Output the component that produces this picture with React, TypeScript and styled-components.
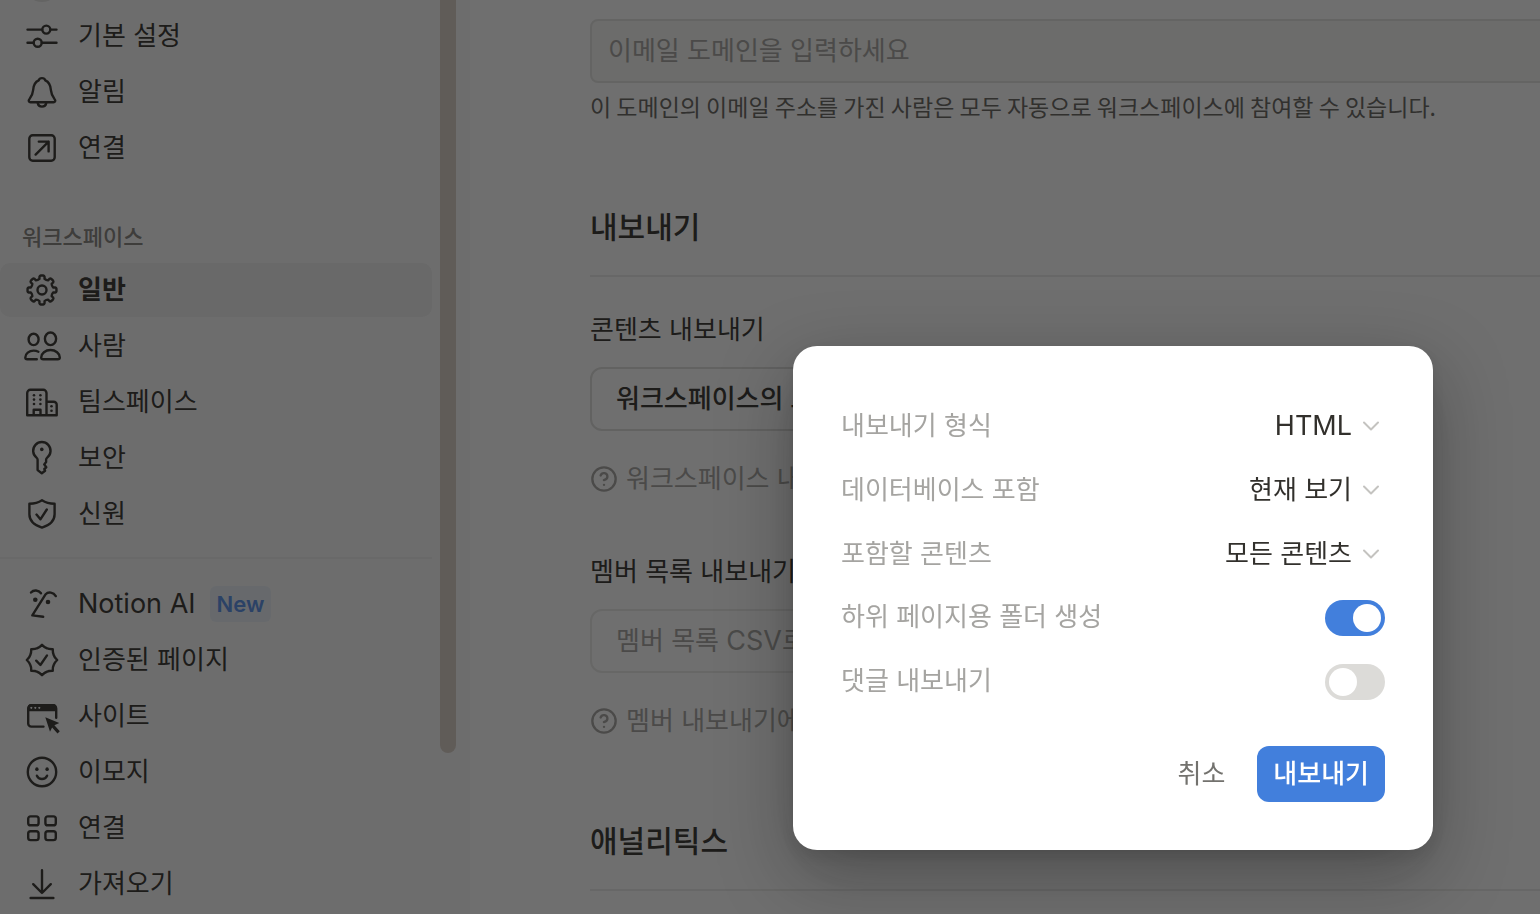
import React from "react";
import styled, { createGlobalStyle, css } from "styled-components";
import { CircleHelp } from "lucide-react";

const GlobalStyle = createGlobalStyle`
  *, *::before, *::after { box-sizing: border-box; }
  html, body { margin: 0; height: 100%; overflow: hidden; }
  #root { height: 100%; }
  body {
    background: #ffffff;
    color: #32302c;
    font-family: Inter, "Noto Sans CJK KR", sans-serif;
    font-size: 26px;
    line-height: 32px;
  }
  button, input, select { font: inherit; color: inherit; margin: 0; }
`;

const Page = styled.div`
  display: grid;
  grid-template-columns: 470px minmax(0, 1fr);
  height: 100vh;
  overflow: hidden;
`;

/* Latin words run one step larger than the Hangul beside them */
const Latin = styled.span`
  font-size: 27px;
`;

/* ---------- sidebar ---------- */

const Sidebar = styled.aside`
  display: flex;
  justify-content: space-between;
  padding-right: 14px;
  background: #fbfbfb;
  overflow: hidden;
`;

const Nav = styled.nav`
  flex: 1;
  margin-right: 8px;
`;

const ScrollThumb = styled.div`
  width: 16px;
  height: 753px;
  max-height: 83vh;
  border-radius: 0 0 8px 8px;
  background: #dacfc6;
`;

const AccountRow = styled.div`
  display: flex;
  align-items: flex-end;
  height: 9px;
  padding: 0 22px 7px;
  overflow: hidden;
`;

const Avatar = styled.span`
  flex: none;
  width: 36px;
  height: 36px;
  margin-left: 2px;
  border-radius: 50%;
  background: #e4e4e2;
`;

const NavList = styled.ul`
  display: flex;
  flex-direction: column;
  gap: 2px;
  margin: 0;
  padding: 0;
  list-style: none;
`;

const NavItem = styled.a<{ $active?: boolean }>`
  display: flex;
  align-items: center;
  gap: 16px;
  height: 54px;
  padding-left: 22px;
  border-radius: 10px;
  color: inherit;
  text-decoration: none;
  white-space: nowrap;
  ${(p) =>
    p.$active &&
    css`
      background: #efefef;
      font-weight: 600;
    `}
`;

const NavHeading = styled.h2`
  margin: 36px 0 0;
  padding-left: 22px;
  font-size: 22px;
  line-height: 52px;
  font-weight: 500;
  color: #84827e;
`;

const NavDivider = styled.hr`
  height: 2px;
  margin: 16px 0 18px;
  border: 0;
  background: #f0f0ef;
`;

const Badge = styled.span`
  padding: 0 7px;
  margin-left: -2px;
  border-radius: 6px;
  background: #ebf1f8;
  color: #568ee8;
  font-size: 22px;
  line-height: 36px;
  font-weight: 600;
`;

const Glyph = styled.svg`
  flex: none;
  width: 40px;
  height: 40px;
  fill: none;
  stroke: currentColor;
  stroke-width: 2.4;
  stroke-linecap: round;
  stroke-linejoin: round;

  .solid {
    fill: currentColor;
    stroke: none;
  }
`;

/* ---------- main column ---------- */

const Main = styled.main`
  padding: 19px 0 0 120px;
  overflow: hidden;
`;

const Column = styled.div`
  margin-right: -24px;
`;

const DomainInput = styled.input`
  display: block;
  width: 100%;
  height: 64px;
  padding: 0 16px 2px;
  border: 2px solid #e3e3e1;
  border-radius: 8px;
  background: #f7f7f4;
  outline: 0;

  &::placeholder {
    color: #a5a4a0;
    opacity: 1;
  }
`;

const Hint = styled.p`
  margin: 7px 0 0;
  font-family: "Noto Sans CJK KR", sans-serif;
  font-size: 23px;
  color: #65635d;
  white-space: nowrap;
`;

const SectionTitle = styled.h1`
  margin: 0;
  padding-bottom: 24px;
  border-bottom: 2px solid #ececeb;
  font-size: 30px;
  line-height: 48px;
  font-weight: 500;
`;

const Section = styled.section`
  margin-top: 81px;

  & + & {
    margin-top: 80px;
  }
`;

const Field = styled.div<{ $first?: boolean }>`
  display: flex;
  flex-direction: column;
  align-items: flex-start;
  margin-top: ${(p) => (p.$first ? 36 : 60)}px;
`;

const FieldTitle = styled.h3`
  margin: 0 0 20px;
  font-size: 26px;
  line-height: 34px;
  font-weight: 400;
`;

const OutlineButton = styled.button`
  height: 64px;
  padding: 0 24px;
  border: 2px solid #dededc;
  border-radius: 12px;
  background: transparent;
  font-weight: 500;
  white-space: nowrap;

  &:disabled {
    border-color: #ebebe9;
    color: #a5a4a0;
    font-weight: 400;
  }
`;

const HelpLink = styled.a`
  display: flex;
  align-items: center;
  gap: 8px;
  margin-top: 32px;
  color: #a5a4a0;
  text-decoration: none;
  white-space: nowrap;
`;

/* ---------- dialog ---------- */

const Overlay = styled.div`
  position: fixed;
  inset: 0;
  display: flex;
  align-items: flex-end;
  justify-content: flex-end;
  padding: 64px 107px;
  background: rgba(15, 15, 15, 0.6);
`;

const Dialog = styled.form`
  width: 640px;
  max-width: 100%;
  padding: 48px;
  border-radius: 24px;
  background: #ffffff;
  box-shadow: 0 6px 12px rgba(15, 15, 15, 0.1), 0 24px 72px rgba(15, 15, 15, 0.35);
`;

const Option = styled.div`
  display: flex;
  align-items: center;
  justify-content: space-between;
  height: 64px;
`;

const OptionLabel = styled.label<{ $raised?: boolean }>`
  padding-bottom: ${(p) => (p.$raised ? 2 : 0)}px;
  color: #a5a4a1;
`;

const SelectBox = styled.div`
  position: relative;
  display: flex;
  align-items: center;
`;

const Select = styled.select<{ $latin?: boolean }>`
  appearance: none;
  field-sizing: content;
  height: 48px;
  padding: 0 33px 0 0;
  border: 0;
  outline: 0;
  background: transparent;
  font-size: ${(p) => (p.$latin ? 27 : 26)}px;
  text-align-last: right;
`;

const Chevron = styled.svg`
  position: absolute;
  right: 5px;
  width: 18px;
  height: 18px;
  fill: none;
  stroke: #c4c3c0;
  stroke-width: 2;
  stroke-linecap: round;
  stroke-linejoin: round;
  pointer-events: none;
`;

const Toggle = styled.input`
  appearance: none;
  display: flex;
  width: 60px;
  height: 36px;
  padding: 4px;
  border-radius: 18px;
  background: #dcdbd8;

  &::before {
    content: "";
    width: 28px;
    height: 28px;
    border-radius: 50%;
    background: #ffffff;
  }

  &:checked {
    justify-content: flex-end;
    background: #427fdc;
  }
`;

const Actions = styled.div`
  display: flex;
  justify-content: flex-end;
  gap: 16px;
  margin-top: 32px;
`;

const ActionButton = styled.button<{ $primary?: boolean }>`
  height: 56px;
  padding: 0 16px;
  border: 0;
  border-radius: 12px;
  background: ${(p) => (p.$primary ? "#427fdc" : "transparent")};
  color: ${(p) => (p.$primary ? "#ffffff" : "#73726e")};
  font-weight: ${(p) => (p.$primary ? 500 : 400)};
`;

/* ---------- icons ---------- */

const polar = (r: number, deg: number) => {
  const a = ((deg - 90) * Math.PI) / 180;
  return `${(20 + r * Math.cos(a)).toFixed(2)} ${(20 + r * Math.sin(a)).toFixed(2)}`;
};

const eight = [0, 45, 90, 135, 180, 225, 270, 315];

const gearPath =
  eight
    .map(
      (t, i) =>
        `${i ? "L" : "M"}${polar(11.4, t - 13)}L${polar(13.4, t - 11)}Q${polar(14.5, t - 9)} ${polar(14.5, t - 5)}` +
        `L${polar(14.5, t + 5)}Q${polar(14.5, t + 9)} ${polar(13.4, t + 11)}L${polar(11.4, t + 13)}` +
        `Q${polar(10.6, t + 22.5)} ${polar(11.4, t + 32)}`
    )
    .join("") + "Z";

const sealPath =
  eight
    .map((t, i) => `${i ? "L" : "M"}${polar(15.2, t)}Q${polar(12.6, t + 13)} ${polar(12.7, t + 22.5)}Q${polar(12.6, t + 32)} ${polar(15.2, t + 45)}`)
    .join("") + "Z";

const icons: Record<string, React.ReactNode> = {
  sliders: (
    <>
      <path d="M5.5 13.6h14.7M28.4 13.6h6.1M5.5 26.7h6.1M19.8 26.7h14.7" />
      <circle cx="24.3" cy="13.6" r="4" />
      <circle cx="15.7" cy="26.7" r="4" />
    </>
  ),
  bell: (
    <>
      <path d="M8.5 30.3h23c1.6 0 2.3-1.6 1.3-2.8-2-2.6-3.6-4.6-3.9-9.3-.3-5-1.9-8.2-5.6-9.8-.5-1.7-1.7-2.3-3.3-2.3s-2.8.6-3.3 2.3c-3.7 1.6-5.3 4.8-5.6 9.8-.3 4.700-1.900 6.700-3.900 9.300-1 1.200-.3 2.800 1.300 2.800z" />
      <path d="M15.800 31.200c.4 2.200 2.100 3.400 4.200 3.400s3.800-1.200 4.200-3.400" />
    </>
  ),
  arrowBox: (
    <>
      <rect x="7.300" y="7.300" width="25.400" height="25.400" rx="3.400" />
      <path d="M13.600 26.600 26.600 13.600M16.800 13.600h9.800v9.800" />
    </>
  ),
  gear: (
    <>
      <path d={gearPath} />
      <circle cx="20" cy="20" r="4.500" />
    </>
  ),
  people: (
    <>
      <ellipse cx="11.600" cy="13.400" rx="5" ry="5.700" />
      <ellipse cx="28.500" cy="12.800" rx="5.600" ry="6.300" />
      <path d="M19.200 31.400c0-4 4.200-7.400 9.300-7.400s9.300 3.400 9.300 7.400c0 1.100-.9 1.800-2 1.800H21.200c-1.100 0-2-.7-2-1.800z" />
      <path d="M16.400 25.700c-1.400-.7-3-1.100-4.700-1.100-4.700 0-8.400 3-8.400 6.800 0 1.100.8 1.800 1.900 1.800h9.600" />
    </>
  ),
  building: (
    <>
      <path d="M5.200 33.300V11a3.200 3.200 0 0 1 3.200-3.200h12.900a3.200 3.200 0 0 1 3.200 3.200v22.300M24.500 19.800h7.200a3 3 0 0 1 3 3v10.500H5.200M11.700 33v-5.300h6.800V33" />
      <g className="solid">
        <circle cx="12" cy="13.200" r="1.300" />
        <circle cx="18.400" cy="13.200" r="1.300" />
        <circle cx="12" cy="17.600" r="1.300" />
        <circle cx="18.400" cy="17.600" r="1.300" />
        <circle cx="12" cy="22" r="1.300" />
        <circle cx="18.400" cy="22" r="1.300" />
        <circle cx="29.500" cy="24.200" r="1.300" />
        <circle cx="29.500" cy="28.700" r="1.300" />
      </g>
    </>
  ),
  key: (
    <>
      <path d="M15.600 21.800c0-.9-.4-1.600-1.100-2.200a8.700 8.700 0 1 1 10.700 0c-.7.6-1.100 1.300-1.100 2.200v2.300l-1.900 2.300 2.100 2.900-2 1.700.8 1.700-3.300 2.600-4.200-3.200z" />
      <circle className="solid" cx="19.800" cy="11.400" r="1.800" />
    </>
  ),
  shield: (
    <>
      <path d="M20 6.200c3.500 2.300 7.600 3.400 12.600 3.500v10.600c0 6.400-4.600 10.800-12.600 13.300-8-2.500-12.600-6.900-12.600-13.300V9.700c5-.1 9.100-1.200 12.600-3.500z" />
      <path d="m14.500 20.600 3.900 4.700 6.400-9.800" />
    </>
  ),
  face: (
    <>
      <path d="M9 8.500c2.600-2.900 7.600-2.600 10 .7M33.800 12.100c-2.300-4-7.500-4.800-10.100-1.900L10.300 31.400l10.900 1.400" />
      <circle className="solid" cx="13.300" cy="15.700" r="2.300" />
      <circle className="solid" cx="26" cy="18" r="2.300" />
    </>
  ),
  seal: (
    <>
      <path d={sealPath} />
      <path d="m14.200 20.700 4.200 4.300 6.600-9.600" />
    </>
  ),
  browser: (
    <>
      <path d="M21.500 30.600H9.400a3.200 3.200 0 0 1-3.200-3.200V12.500a3.200 3.200 0 0 1 3.200-3.200H31a3.200 3.200 0 0 1 3.200 3.200v9.300" />
      <path
        className="solid"
        fillRule="evenodd"
        d="M5.500 15.200V12a3.900 3.900 0 0 1 3.900-3.900H31a3.900 3.900 0 0 1 3.900 3.900v3.200zM9.300 10.700a1 1 0 1 0 .01 0zM13.300 10.700a1 1 0 1 0 .01 0zM17.300 10.700a1 1 0 1 0 .01 0z"
      />
      <path className="solid" d="M23.300 21.300 37.300 27l-4.900 2.300 5.400 6-2.300 2.100-5.400-6-2.100 4.400z" />
    </>
  ),
  smiley: (
    <>
      <circle cx="20" cy="20" r="14.200" />
      <path d="M14.900 23.700c1 2.200 2.900 3.300 5.100 3.300s4.100-1.100 5.100-3.300" />
      <ellipse className="solid" cx="14.900" cy="17.200" rx="1.700" ry="1.900" />
      <ellipse className="solid" cx="25.100" cy="17.200" rx="1.700" ry="1.900" />
    </>
  ),
  grid: (
    <>
      <rect x="6.200" y="8.400" width="10.400" height="8.900" rx="2.400" />
      <rect x="23.400" y="8.400" width="10.400" height="8.900" rx="2.400" />
      <rect x="6.200" y="23.200" width="10.400" height="8.900" rx="2.400" />
      <rect x="23.400" y="23.200" width="10.400" height="8.900" rx="2.400" />
    </>
  ),
  download: <path d="M20 6.200v22.600M11.200 20.200l8.800 8.800 8.800-8.800M8.600 34h22.800" />,
};

const Icon = ({ name }: { name: string }) => (
  <Glyph viewBox="0 0 40 40" aria-hidden="true">
    {icons[name]}
  </Glyph>
);

interface Entry {
  icon: string;
  label: React.ReactNode;
  active?: boolean;
  badge?: string;
}

const accountEntries: Entry[] = [
  { icon: "sliders", label: "기본 설정" },
  { icon: "bell", label: "알림" },
  { icon: "arrowBox", label: "연결" },
];

const workspaceEntries: Entry[] = [
  { icon: "gear", label: "일반", active: true },
  { icon: "people", label: "사람" },
  { icon: "building", label: "팀스페이스" },
  { icon: "key", label: "보안" },
  { icon: "shield", label: "신원" },
];

const featureEntries: Entry[] = [
  { icon: "face", label: <Latin>Notion AI</Latin>, badge: "New" },
  { icon: "seal", label: "인증된 페이지" },
  { icon: "browser", label: "사이트" },
  { icon: "smiley", label: "이모지" },
  { icon: "grid", label: "연결" },
  { icon: "download", label: "가져오기" },
];

const Entries = ({ items }: { items: Entry[] }) => (
  <NavList>
    {items.map((item) => (
      <li key={item.icon}>
        <NavItem href="#" $active={item.active} aria-current={item.active ? "page" : undefined}>
          <Icon name={item.icon} />
          <span>{item.label}</span>
          {item.badge && <Badge>{item.badge}</Badge>}
        </NavItem>
      </li>
    ))}
  </NavList>
);

const SelectOption = ({ id, label, value, latin }: { id: string; label: string; value: string; latin?: boolean }) => (
  <Option>
    <OptionLabel htmlFor={id}>{label}</OptionLabel>
    <SelectBox>
      <Select id={id} $latin={latin} defaultValue={value}>
        <option>{value}</option>
      </Select>
      <Chevron viewBox="0 0 18 18" aria-hidden="true">
        <path d="m2 5.500 7 7 7-7" />
      </Chevron>
    </SelectBox>
  </Option>
);

const ToggleOption = ({ id, label, on }: { id: string; label: string; on?: boolean }) => (
  <Option>
    <OptionLabel htmlFor={id} $raised>
      {label}
    </OptionLabel>
    <Toggle id={id} type="checkbox" role="switch" defaultChecked={on} />
  </Option>
);

export default function App() {
  return (
    <>
      <GlobalStyle />
      <Page>
        <Sidebar>
          <Nav>
            <AccountRow>
              <Avatar />
            </AccountRow>
            <Entries items={accountEntries} />
            <NavHeading>워크스페이스</NavHeading>
            <Entries items={workspaceEntries} />
            <NavDivider />
            <Entries items={featureEntries} />
          </Nav>
          <ScrollThumb />
        </Sidebar>

        <Main>
          <Column>
            <DomainInput type="text" aria-label="이메일 도메인" placeholder="이메일 도메인을 입력하세요" />
            <Hint>이 도메인의 이메일 주소를 가진 사람은 모두 자동으로 워크스페이스에 참여할 수 있습니다.</Hint>

            <Section>
              <SectionTitle>내보내기</SectionTitle>
              <Field $first>
                <FieldTitle>콘텐츠 내보내기</FieldTitle>
                <OutlineButton type="button">워크스페이스의 모든 콘텐츠 내보내기</OutlineButton>
                <HelpLink href="#">
                  <CircleHelp size={28} />
                  워크스페이스 내보내기
                </HelpLink>
              </Field>
              <Field>
                <FieldTitle>멤버 목록 내보내기</FieldTitle>
                <OutlineButton type="button" disabled>
                  멤버 목록 <Latin>CSV</Latin>로 내보내기
                </OutlineButton>
                <HelpLink href="#">
                  <CircleHelp size={28} />
                  멤버 내보내기에 대해 알아보기
                </HelpLink>
              </Field>
            </Section>

            <Section>
              <SectionTitle>애널리틱스</SectionTitle>
            </Section>
          </Column>
        </Main>
      </Page>

      <Overlay>
        <Dialog role="dialog" aria-label="내보내기" onSubmit={(e) => e.preventDefault()}>
          <SelectOption id="format" label="내보내기 형식" value="HTML" latin />
          <SelectOption id="databases" label="데이터베이스 포함" value="현재 보기" />
          <SelectOption id="content" label="포함할 콘텐츠" value="모든 콘텐츠" />
          <ToggleOption id="folders" label="하위 페이지용 폴더 생성" on />
          <ToggleOption id="comments" label="댓글 내보내기" />
          <Actions>
            <ActionButton type="button">취소</ActionButton>
            <ActionButton type="submit" $primary>
              내보내기
            </ActionButton>
          </Actions>
        </Dialog>
      </Overlay>
    </>
  );
}
